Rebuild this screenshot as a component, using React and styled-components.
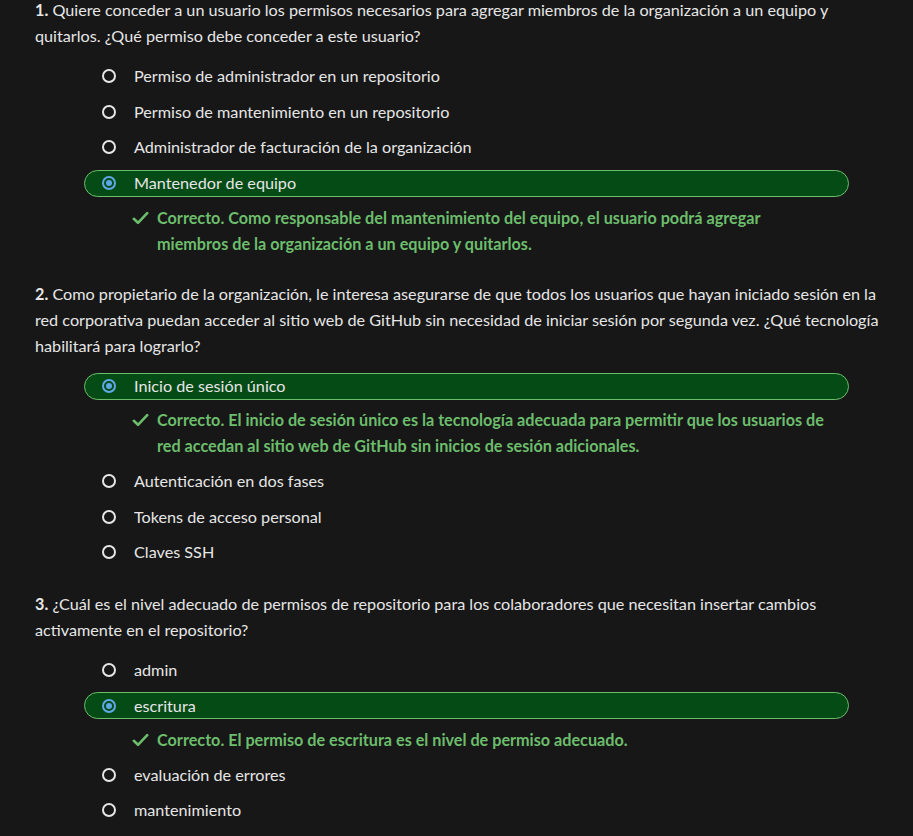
import React from "react";
import styled, { createGlobalStyle } from "styled-components";

const GlobalStyle = createGlobalStyle`
  html, body {
    margin: 0;
    padding: 0;
    background: #171717;
  }
  body {
    font-family: Lato, "Open Sans", sans-serif;
    color: #e6e6e6;
    overflow: hidden;
  }
`;

const questions = [
  {
    number: "1.",
    text: "Quiere conceder a un usuario los permisos necesarios para agregar miembros de la organización a un equipo y quitarlos. ¿Qué permiso debe conceder a este usuario?",
    options: [
      "Permiso de administrador en un repositorio",
      "Permiso de mantenimiento en un repositorio",
      "Administrador de facturación de la organización",
      "Mantenedor de equipo",
    ],
    selected: 3,
    feedback:
      "Correcto. Como responsable del mantenimiento del equipo, el usuario podrá agregar miembros de la organización a un equipo y quitarlos.",
  },
  {
    number: "2.",
    text: "Como propietario de la organización, le interesa asegurarse de que todos los usuarios que hayan iniciado sesión en la red corporativa puedan acceder al sitio web de GitHub sin necesidad de iniciar sesión por segunda vez. ¿Qué tecnología habilitará para lograrlo?",
    options: [
      "Inicio de sesión único",
      "Autenticación en dos fases",
      "Tokens de acceso personal",
      "Claves SSH",
    ],
    selected: 0,
    feedback:
      "Correcto. El inicio de sesión único es la tecnología adecuada para permitir que los usuarios de red accedan al sitio web de GitHub sin inicios de sesión adicionales.",
  },
  {
    number: "3.",
    text: "¿Cuál es el nivel adecuado de permisos de repositorio para los colaboradores que necesitan insertar cambios activamente en el repositorio?",
    options: ["admin", "escritura", "evaluación de errores", "mantenimiento"],
    selected: 1,
    feedback: "Correcto. El permiso de escritura es el nivel de permiso adecuado.",
  },
];

function CheckIcon() {
  return (
    <svg width="17" height="14" viewBox="0 0 17 14">
      <path
        d="M1.8 7.8 L6 11.8 L15.2 2.2"
        fill="none"
        stroke="#6cbd6c"
        strokeWidth="2.6"
        strokeLinecap="round"
        strokeLinejoin="round"
      />
    </svg>
  );
}

function App() {
  return (
    <>
      <GlobalStyle />
      <Page>
        {questions.map((q) => (
          <Question key={q.number}>
            <Prompt>
              <strong>{q.number}</strong> {q.text}
            </Prompt>
            <OptionList>
              {q.options.map((opt, i) => (
                <React.Fragment key={opt}>
                  <Option $selected={i === q.selected}>
                    <Radio $selected={i === q.selected} />
                    <span>{opt}</span>
                  </Option>
                  {i === q.selected && (
                    <Feedback>
                      <CheckWrap>
                        <CheckIcon />
                      </CheckWrap>
                      <p>{q.feedback}</p>
                    </Feedback>
                  )}
                </React.Fragment>
              ))}
            </OptionList>
          </Question>
        ))}
      </Page>
    </>
  );
}

const Page = styled.main`
  width: 855px;
  margin: -3px 0 0 35px;
  font-size: 16.2px;
  line-height: 26px;
`;

const Question = styled.section`
  margin-bottom: 21px;
`;

const Prompt = styled.p`
  margin: 0 0 9px;

  strong {
    font-weight: 700;
  }
`;

const OptionList = styled.div`
  display: flex;
  flex-direction: column;
  margin: 0 41px 0 49px;
`;

const Option = styled.label`
  display: flex;
  align-items: center;
  gap: 18px;
  height: 27px;
  margin: 4.4px 0;
  padding-left: 17px;
  box-sizing: border-box;
  border-radius: 14px;
  border: 1.5px solid ${(p) => (p.$selected ? "#6cbd6c" : "transparent")};
  background: ${(p) => (p.$selected ? "#054b16" : "transparent")};
  color: #e6e6e6;
`;

const Radio = styled.span`
  flex: none;
  position: relative;
  width: 14px;
  height: 14px;
  box-sizing: border-box;
  border-radius: 50%;
  border: 2px solid ${(p) => (p.$selected ? "#5fa8e8" : "#e6e6e6")};

  &::after {
    content: "";
    display: ${(p) => (p.$selected ? "block" : "none")};
    position: absolute;
    inset: 2px;
    border-radius: 50%;
    background: #5fa8e8;
  }
`;

const Feedback = styled.div`
  display: flex;
  gap: 8px;
  margin: 3.5px 0;
  padding-left: 48px;
  width: 744px;
  box-sizing: border-box;
  color: #6cbd6c;
  font-weight: 700;

  p {
    margin: 0;
  }
`;

const CheckWrap = styled.span`
  flex: none;
  display: flex;
  align-items: center;
  height: 26px;
`;

export default App;
